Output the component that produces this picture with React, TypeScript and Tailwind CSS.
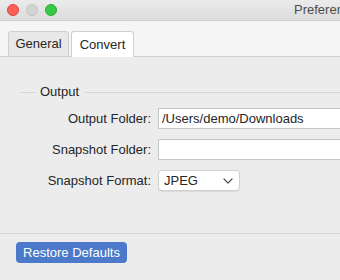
export default function App() {
  return (
    <div
      className="flex h-[280px] w-[340px] flex-col overflow-hidden bg-[#ececec] text-[13px] text-[#262626]"
      style={{ fontFamily: '"Liberation Sans", Arial, sans-serif' }}
    >
      {/* Title bar */}
      <div className="flex h-[21px] shrink-0 items-center gap-[7px] overflow-hidden border-b border-[#d1d1d1] bg-gradient-to-b from-[#ebebeb] to-[#dcdcdc] pl-[7px]">
        <span className="h-[12px] w-[12px] shrink-0 rounded-full border border-[#e0443e] bg-[#fd5f57]" />
        <span className="h-[12px] w-[12px] shrink-0 rounded-full border border-[#c4c4c4] bg-[#d4d4d4]" />
        <span className="h-[12px] w-[12px] shrink-0 rounded-full border border-[#2dac2f] bg-[#35c94a]" />
        <span className="ml-[230px] shrink-0 whitespace-nowrap text-[#4d4d4d]">Preferences</span>
      </div>

      {/* Tab strip */}
      <div className="flex h-[36px] shrink-0 items-end gap-[2px] border-b border-[#cfcfcf] bg-[#f5f5f5] pl-[8px]">
        <div className="-mb-px flex h-[26px] w-[61px] items-center justify-center rounded-t-[3px] border border-[#cfcfcf] bg-[#e8e8e8]">
          General
        </div>
        <div className="-mb-px flex h-[26px] w-[63px] items-center justify-center rounded-t-[3px] border border-b-0 border-[#cfcfcf] bg-white">
          Convert
        </div>
      </div>

      {/* Content */}
      <div className="h-[177px] shrink-0 border-b border-[#d6d6d6] pt-[27px]">
        <div className="flex items-center">
          <div className="ml-[20px] h-px w-[16px] bg-[#d6d6d6]" />
          <span className="px-[4px] leading-[16px]">Output</span>
          <div className="ml-[2px] h-px flex-1 bg-[#d6d6d6]" />
        </div>

        <div className="mt-[8px] flex flex-col gap-[10px]">
          <div className="flex h-[21px] items-center">
            <span className="w-[151px] shrink-0 text-right">Output Folder:</span>
            <div className="ml-[7px] flex h-[21px] w-[200px] shrink-0 items-center border border-[#c6c6c6] bg-white pl-[3px]">
              /Users/demo/Downloads
            </div>
          </div>
          <div className="flex h-[21px] items-center">
            <span className="w-[151px] shrink-0 text-right">Snapshot Folder:</span>
            <div className="ml-[7px] h-[21px] w-[200px] shrink-0 border border-[#c6c6c6] bg-white" />
          </div>
          <div className="flex h-[21px] items-center">
            <span className="w-[151px] shrink-0 text-right">Snapshot Format:</span>
            <div className="ml-[7px] flex h-[21px] w-[82px] shrink-0 items-center justify-between rounded-[4px] border border-[#d0d0d0] bg-white pl-[5px] pr-[6px] shadow-[0_1px_1px_rgba(0,0,0,0.08)]">
              <span>JPEG</span>
              <svg width="10" height="6" viewBox="0 0 10 6" fill="none">
                <path d="M1 1l4 4 4-4" stroke="#555" strokeWidth="1.2" strokeLinecap="round" strokeLinejoin="round" />
              </svg>
            </div>
          </div>
        </div>
      </div>

      {/* Bottom bar */}
      <div className="flex-1 pl-[16px] pt-[8px]">
        <button className="h-[21px] w-[111px] rounded-[4px] bg-[#4c79c9] text-white">
          Restore Defaults
        </button>
      </div>
    </div>
  );
}
